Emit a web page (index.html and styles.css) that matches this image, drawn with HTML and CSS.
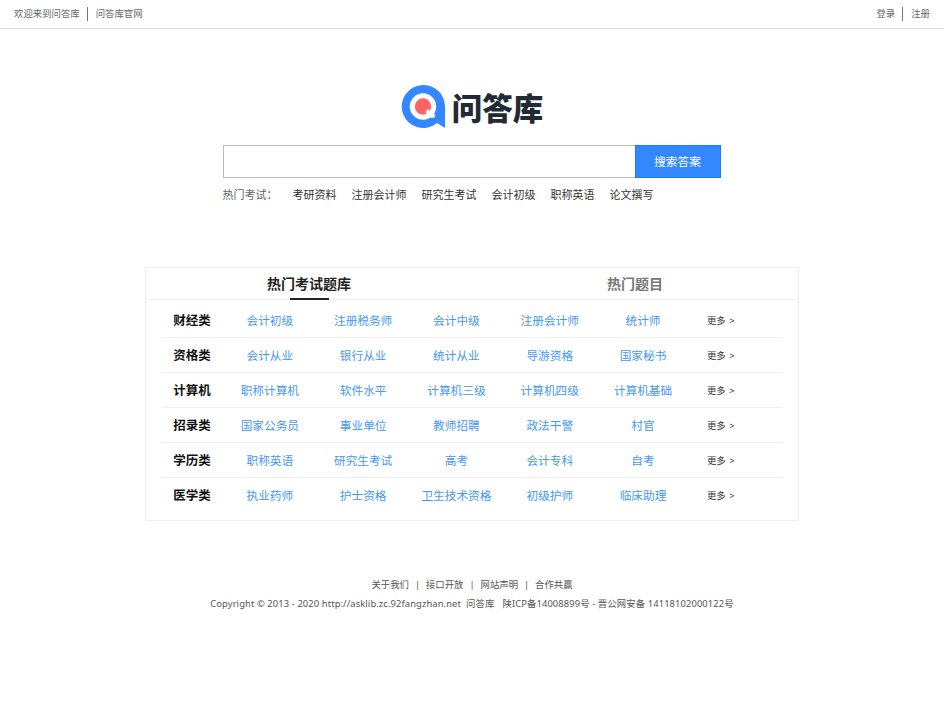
FILE: index.html
```html
<!DOCTYPE html>
<html lang="zh-CN">
<head>
<meta charset="UTF-8">
<meta name="viewport" content="width=device-width, initial-scale=1.0">
<title>问答库</title>
<link rel="stylesheet" href="styles.css">
</head>

<body>
<div class="topbar">
    <div class="top-links"><a>欢迎来到问答库</a><a>问答库官网</a></div>
    <div class="top-links"><a>登录</a><a>注册</a></div>
</div>

<div class="logo">
    <svg width="45" height="44" viewBox="0 0 45 44">
        <path d="M22 0a21.500 21.500 0 1 0 14 38L44 43V21.500A21.500 21.500 0 0 0 22 0z" fill="#3388ff"/>
        <circle cx="22" cy="21.500" r="13.200" fill="#fff"/>
        <circle cx="22" cy="21.500" r="8.200" fill="#ff6464"/>
        <path d="M24.500 26.500l2.500-2.500 2.500 2.500 2-1.500 1.500 4 1.500 1-1 2.500-3 .5-4-2z" fill="#fff"/>
    </svg>
    <span class="logo-name">问答库</span>
</div>

<div class="search">
    <div class="search-form">
        <input type="text" class="search-input">
        <button class="search-button">搜索答案</button>
    </div>
    <div class="hot">
        <span class="hot-title">热门考试：</span>
        <a>考研资料</a><a>注册会计师</a><a>研究生考试</a><a>会计初级</a><a>职称英语</a><a>论文撰写</a>
    </div>
</div>

<div class="box">
    <div class="tabs">
        <div class="tab active">热门考试题库</div>
        <div class="tab">热门题目</div>
    </div>
    <div class="list">
        <div class="row"><b>财经类</b><a>会计初级</a><a>注册税务师</a><a>会计中级</a><a>注册会计师</a><a>统计师</a><span class="more">更多 &gt;</span></div>
        <div class="row"><b>资格类</b><a>会计从业</a><a>银行从业</a><a>统计从业</a><a>导游资格</a><a>国家秘书</a><span class="more">更多 &gt;</span></div>
        <div class="row"><b>计算机</b><a>职称计算机</a><a>软件水平</a><a>计算机三级</a><a>计算机四级</a><a>计算机基础</a><span class="more">更多 &gt;</span></div>
        <div class="row"><b>招录类</b><a>国家公务员</a><a>事业单位</a><a>教师招聘</a><a>政法干警</a><a>村官</a><span class="more">更多 &gt;</span></div>
        <div class="row"><b>学历类</b><a>职称英语</a><a>研究生考试</a><a>高考</a><a>会计专科</a><a>自考</a><span class="more">更多 &gt;</span></div>
        <div class="row"><b>医学类</b><a>执业药师</a><a>护士资格</a><a>卫生技术资格</a><a>初级护师</a><a>临床助理</a><span class="more">更多 &gt;</span></div>
    </div>
</div>

<div class="footer">
    <div class="footer-links"><a>关于我们</a><i>|</i><a>接口开放</a><i>|</i><a>网站声明</a><i>|</i><a>合作共赢</a></div>
    <div class="copyright"><span>Copyright © 2013 - 2020 http://asklib.zc.92fangzhan.net</span><span>问答库</span><span class="icp">陕ICP备14008899号 - 晋公网安备 14118102000122号</span></div>
</div>
</body>
</html>
```
FILE: styles.css
```css
* {
    box-sizing: border-box;
}
body {
    margin: 0;
    background: #fff;
    color: #666;
    font-family: "Noto Sans", "Noto Sans CJK SC", sans-serif;
    font-size: 9.4px;
}
.topbar {
    display: flex;
    justify-content: space-between;
    align-items: center;
    height: 29px;
    padding: 0 14px;
    border-bottom: 1px solid #ddd;
}
.top-links {
    display: flex;
    line-height: 14px;
}
.top-links a + a {
    margin-left: 7px;
    padding-left: 8px;
    border-left: 1px solid #777;
}
.logo {
    display: flex;
    justify-content: center;
    margin-top: 56px;
    height: 44px;
}
.logo-name {
    margin-left: 6px;
    font-size: 30.5px;
    font-weight: 900;
    line-height: 44px;
    color: #222b33;
    font-family: "Noto Sans CJK SC", sans-serif;
}
.search {
    width: 498px;
    margin: 16px 0 0 222.5px;
}
.search-form {
    display: flex;
    height: 33px;
}
.search-input {
    width: 412px;
    border: 1px solid #bbb;
    border-right: 0;
    padding: 0 8px;
    outline: none;
}
.search-button {
    width: 86px;
    padding: 0 0 2px;
    border: 1px solid #1f78ff;
    background: #3388ff;
    color: #fff;
    font-family: inherit;
    font-size: 11.7px;
}
.hot {
    display: flex;
    gap: 15px;
    margin-top: 7px;
    line-height: 20px;
    font-size: 11px;
    color: #333;
    white-space: nowrap;
}
.hot-title {
    width: 55px;
    color: #666;
}
.box {
    width: 654px;
    height: 254px;
    margin: 62px auto 0;
    border: 1px solid #eee;
}
.tabs {
    display: flex;
    height: 32px;
    border-bottom: 1px solid #eee;
}
.tab {
    flex: 1;
    display: flex;
    flex-direction: column;
    align-items: center;
    line-height: 31px;
    font-size: 14px;
    font-weight: bold;
    color: #777;
}
.tab.active {
    color: #222;
}
.tab.active::after {
    content: "";
    flex: none;
    width: 39px;
    height: 2px;
    margin-top: -1px;
    background: #222;
}
.list {
    margin: 3px 15px 0;
}
.row {
    display: grid;
    grid-template-columns: 10% repeat(5, 15%) 10%;
    height: 35px;
    line-height: 36px;
    border-bottom: 1px solid #eee;
    text-align: center;
    font-size: 11.67px;
    color: #4597f3;
    white-space: nowrap;
}
.row:last-child {
    border-bottom: 0;
}
.row b {
    font-size: 12.5px;
    color: #111;
}
.more {
    font-size: 9.4px;
    word-spacing: 1px;
    color: #333;
}
.footer {
    margin-top: 54px;
    line-height: 19px;
    color: #555;
}
.footer-links,
.copyright {
    display: flex;
    justify-content: center;
    white-space: pre;
}
.footer-links i {
    width: 17px;
    padding-left: 6px;
    font-style: normal;
}
.copyright {
    letter-spacing: 0.1px;
}
.copyright span + span {
    margin-left: 5px;
}
.copyright span.icp {
    margin-left: 8px;
}
```
